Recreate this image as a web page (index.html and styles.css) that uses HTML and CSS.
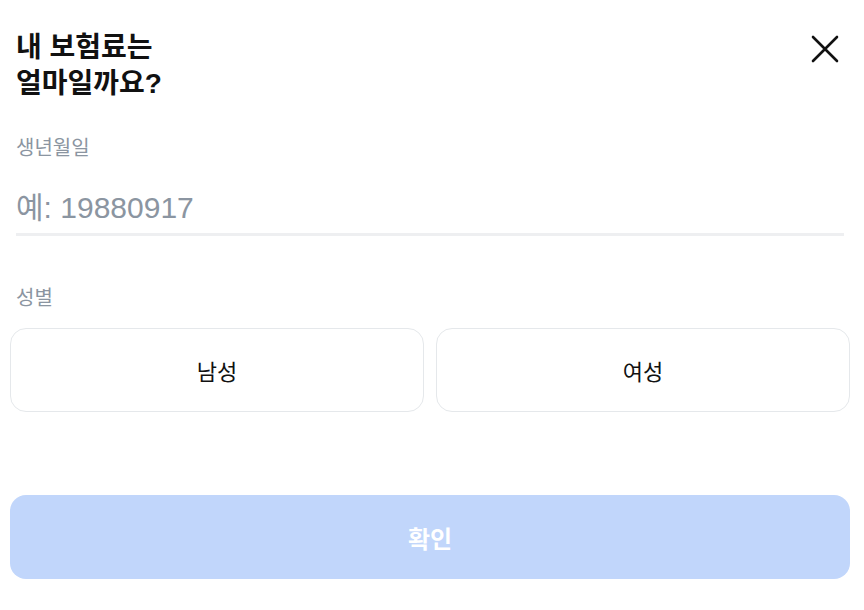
FILE: index.html
```html
<!DOCTYPE html>
<html lang="ko">
<head>
<meta charset="utf-8">
<link rel="stylesheet" href="styles.css">
</head>
<body>
<div class="page">
  <header class="head">
    <h1 class="title">내 보험료는<br>얼마일까요?</h1>
    <button class="close" aria-label="닫기">
      <svg width="28" height="28" viewBox="0 0 28 28"><path d="M2 2L26 26M26 2L2 26" stroke="#111" stroke-width="2.6" stroke-linecap="round"/></svg>
    </button>
  </header>
  <div class="field">
    <div class="label">생년월일</div>
    <div class="input">예: 19880917</div>
  </div>
  <div class="field gender">
    <div class="label">성별</div>
    <div class="choices">
      <button class="choice">남성</button>
      <button class="choice">여성</button>
    </div>
  </div>
  <button class="confirm">확인</button>
</div>
</body>
</html>
```
FILE: styles.css
```css
* { box-sizing: border-box; }
body {
  margin: 0;
  background: #fff;
  font-family: "Liberation Sans", "Noto Sans CJK KR", sans-serif;
  color: #191f28;
}
.page {
  padding: 30px 14px 0 10px;
}
.head {
  display: flex;
  justify-content: space-between;
  align-items: flex-start;
  padding-left: 6px;
}
.title {
  margin: 0;
  font-size: 28px;
  line-height: 36px;
  font-weight: 700;
  color: #111;
}
.close {
  border: 0;
  background: none;
  padding: 0;
  margin: 3px 9px 0 0;
  width: 32px;
  height: 32px;
  display: flex;
  align-items: center;
  justify-content: center;
}
.field { padding: 0 6px; }
.label {
  margin-top: 32px;
  font-size: 20px;
  line-height: 28px;
  color: #8b95a1;
}
.input {
  margin-top: 26px;
  font-size: 30px;
  line-height: 40px;
  color: #8b95a1;
  padding-bottom: 5px;
  border-bottom: 3px solid #eeeff1;
}
.gender { padding: 0; }
.gender .label { padding-left: 6px; margin-top: 48px; }
.choices {
  display: grid;
  grid-template-columns: 1fr 1fr;
  gap: 12px;
  margin-top: 16px;
}
.choice {
  height: 84px;
  border: 1px solid #e5e8eb;
  border-radius: 16px;
  background: #fff;
  font-family: inherit;
  font-size: 22px;
  color: #111;
}
.confirm {
  display: block;
  width: 100%;
  height: 84px;
  margin-top: 83px;
  border: 0;
  border-radius: 16px;
  background: #c1d6fb;
  color: #fff;
  font-family: inherit;
  font-size: 24px;
  font-weight: 700;
}
```
